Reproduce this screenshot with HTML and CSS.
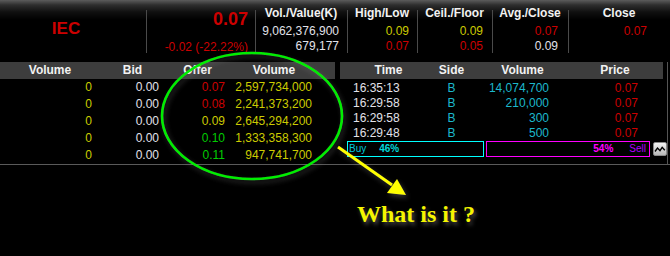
FILE: index.html
```html
<!DOCTYPE html>
<html lang="en">
<head>
    <meta charset="UTF-8">
    <title>IEC quote</title>
    <link rel="stylesheet" href="styles.css">
</head>
<body>

<div class="quote">
    <div class="sym">IEC</div>
    <div class="last line">
        <div class="price">0.07</div>
        <div class="chg">-0.02 (-22.22%)</div>
    </div>
    <div class="qcol line vol">
        <div class="qh">Vol./Value(K)</div>
        <div class="qv white">9,062,376,900</div>
        <div class="qv white">679,177</div>
    </div>
    <div class="qcol line hl">
        <div class="qh">High/Low</div>
        <div class="qv yellow">0.09</div>
        <div class="qv red">0.07</div>
    </div>
    <div class="qcol line cf">
        <div class="qh">Ceil./Floor</div>
        <div class="qv yellow">0.09</div>
        <div class="qv red">0.05</div>
    </div>
    <div class="qcol line ac">
        <div class="qh">Avg./Close</div>
        <div class="qv red">0.07</div>
        <div class="qv white">0.09</div>
    </div>
    <div class="qcol line cl">
        <div class="qh">Close</div>
        <div class="qv red">0.07</div>
    </div>
</div>

<div class="board">
    <!-- bid / offer -->
    <div class="book">
        <div class="book-head">
            <span>Volume</span><span>Bid</span><span>Offer</span><span>Volume</span>
        </div>
        <div class="book-row">
            <span class="yellow">0</span><span class="white">0.00</span><span class="red">0.07</span><span class="yellow">2,597,734,000</span>
        </div>
        <div class="book-row">
            <span class="yellow">0</span><span class="white">0.00</span><span class="red">0.08</span><span class="yellow">2,241,373,200</span>
        </div>
        <div class="book-row">
            <span class="yellow">0</span><span class="white">0.00</span><span class="yellow">0.09</span><span class="yellow">2,645,294,200</span>
        </div>
        <div class="book-row">
            <span class="yellow">0</span><span class="white">0.00</span><span class="green">0.10</span><span class="yellow">1,333,358,300</span>
        </div>
        <div class="book-row">
            <span class="yellow">0</span><span class="white">0.00</span><span class="green">0.11</span><span class="yellow">947,741,700</span>
        </div>
    </div>

    <!-- ticker -->
    <div class="ticks">
        <div class="tick-head">
            <span>Time</span><span>Side</span><span>Volume</span><span>Price</span>
        </div>
        <div class="tick-list">
            <div class="tick-row">
                <span class="white">16:35:13</span><span class="teal">B</span><span class="teal">14,074,700</span><span class="red">0.07</span>
            </div>
            <div class="tick-row">
                <span class="white">16:29:58</span><span class="teal">B</span><span class="teal">210,000</span><span class="red">0.07</span>
            </div>
            <div class="tick-row">
                <span class="white">16:29:58</span><span class="teal">B</span><span class="teal">300</span><span class="red">0.07</span>
            </div>
            <div class="tick-row">
                <span class="white">16:29:48</span><span class="teal">B</span><span class="teal">500</span><span class="red">0.07</span>
            </div>
        </div>
        <div class="ratio">
            <div class="buy"><span class="lbl">Buy</span><b>46%</b></div>
            <div class="sell"><b>54%</b><span class="lbl">Sell</span></div>
            <div class="chart-btn">
                <svg width="14" height="14" viewBox="0 0 14 14">
                    <polyline points="2,9.5 4.5,6 7,8.7 9.2,5.3 11.8,8.2" fill="none" stroke="#000" stroke-width="1.4"/>
                </svg>
            </div>
        </div>
    </div>
</div>

<div class="note">What is it ?</div>

<!-- annotation marks -->
<svg class="marks" width="670" height="256" viewBox="0 0 670 256">
    <defs>
        <filter id="soft" x="-20%" y="-20%" width="140%" height="140%">
            <feDropShadow dx="2" dy="3" stdDeviation="2.5" flood-color="#888" flood-opacity="0.35"/>
        </filter>
    </defs>
    <ellipse cx="252" cy="116" rx="90" ry="63" fill="none" stroke="#00ee00" stroke-width="2.6" filter="url(#soft)"/>
    <g filter="url(#soft)">
        <line x1="338" y1="147" x2="392" y2="185" stroke="#ffff00" stroke-width="3"/>
        <polygon points="406,195 387,193 397,179" fill="#ffff00"/>
    </g>
</svg>

</body>
</html>
```

FILE: styles.css
```css
*{
    margin: 0;
    padding: 0;
    box-sizing: border-box;
}

body{
    width: 670px;
    height: 256px;
    position: relative;
    overflow: hidden;
    background-color: #000;
    font-family: "Liberation Sans", Arial, sans-serif;
    font-size: 12px;
    color: #e0e0e0;
}

/* colours */
.white{ color: #e2e2ea; }
.red{ color: #cc0000; }
.yellow{ color: #cccc00; }
.green{ color: #00cc00; }
.teal{ color: #1cb8cc; }

/* top quote strip */
.quote{
    display: flex;
    height: 58px;
    background: linear-gradient(#5c5c5c 0, #2e2e2e 5px, #101010 12px, #000 20px);
}

/* vertical divider */
.line{
    background: linear-gradient(#4a4a4a, #4a4a4a) 0 10px / 1px 43px no-repeat;
}

.sym{
    width: 146px;
    padding-right: 14px;
    text-align: center;
    line-height: 58px;
    font-size: 17px;
    font-weight: bold;
    color: #cc0000;
}

.last{
    width: 109px;
    padding: 9px 7px 0 0;
    text-align: right;
    color: #cc0000;
}

.price{
    font-size: 18px;
    font-weight: bold;
    line-height: 20px;
}

.chg{
    margin-top: 11px;
    line-height: 14px;
}

.qcol{
    padding-top: 6px;
}

.qh{
    line-height: 15px;
    margin-bottom: 3px;
    text-align: center;
    font-weight: bold;
    color: #f2f2f2;
}

.qv{
    line-height: 15px;
    text-align: right;
}

.vol{ width: 92px; }
.vol .qv{ padding-right: 8px; }
.hl{ width: 70px; }
.hl .qv{ padding-right: 8px; }
.cf{ width: 75px; }
.cf .qv{ padding-right: 9px; }
.ac{ width: 76px; }
.ac .qv{ padding-right: 10px; }
.cl{ width: 102px; }
.cl .qv{ padding-right: 23px; }

/* lower board */
.board{
    display: flex;
    padding-top: 4px;
    border-bottom: 1px solid #5a5a5a;
}

.book{
    width: 335px;
}

.book-head,
.book-row{
    display: grid;
    grid-template-columns: 100px 65px 65px 88px;
    line-height: 17px;
}

.book-head,
.tick-head{
    background-color: #3d3d3d;
    font-weight: bold;
    color: #f2f2f2;
    text-align: center;
}

.book-row{
    text-align: right;
}

.book-row span:nth-child(1){ padding-right: 8px; }
.book-row span:nth-child(2){ padding-right: 6px; }
.book-row span:nth-child(3){ padding-right: 5px; }
.book-row span:nth-child(4){ padding-right: 6px; }

.ticks{
    width: 328px;
    margin-left: 5px;
    padding-right: 4px;
    border-right: 1px solid #555;
}

.tick-head,
.tick-row{
    display: grid;
    grid-template-columns: 97px 29px 113px 72px;
}

.tick-head{
    line-height: 17px;
}

.tick-list{
    margin-top: 2px;
}

.tick-row{
    line-height: 15px;
}

.tick-row span:nth-child(1){ padding-left: 13px; }
.tick-row span:nth-child(2){ text-align: center; }
.tick-row span:nth-child(3){ text-align: right; padding-right: 30px; }
.tick-row span:nth-child(4){ text-align: right; padding-right: 13px; }

/* buy / sell ratio */
.ratio{
    display: flex;
    height: 16px;
    margin: 0 -4px 0 7px;
    font-size: 10px;
    line-height: 14px;
}

.buy{
    width: 137px;
    padding-left: 1px;
    border: 1px solid #00ffff;
    color: #00c8dc;
}

.buy b{
    margin-left: 13px;
    color: #00d8d8;
}

.sell{
    width: 164px;
    margin-left: 2px;
    padding-right: 3px;
    border: 1px solid #ff00ff;
    text-align: right;
}

.sell b{
    color: #ff00ff;
}

.sell .lbl{
    margin-left: 16px;
    color: #b000ff;
}

.chart-btn{
    width: 14px;
    height: 14px;
    margin: 1px 0 0 3px;
    border: 1px solid #8a8a8a;
    border-radius: 2px;
    background: linear-gradient(#f4f4f4, #b8b8b8);
}

.chart-btn svg{
    display: block;
    margin: -1px 0 0 -1px;
}

/* annotation */
.note{
    margin-top: 37px;
    padding-left: 357px;
    font-family: "Liberation Serif", "Times New Roman", serif;
    font-size: 24px;
    font-weight: bold;
    line-height: 24px;
    color: #f5f500;
    text-shadow: 2px 3px 4px rgba(150, 150, 150, 0.5);
}

.marks{
    position: absolute;
    left: 0;
    top: 0;
    pointer-events: none;
}
```
